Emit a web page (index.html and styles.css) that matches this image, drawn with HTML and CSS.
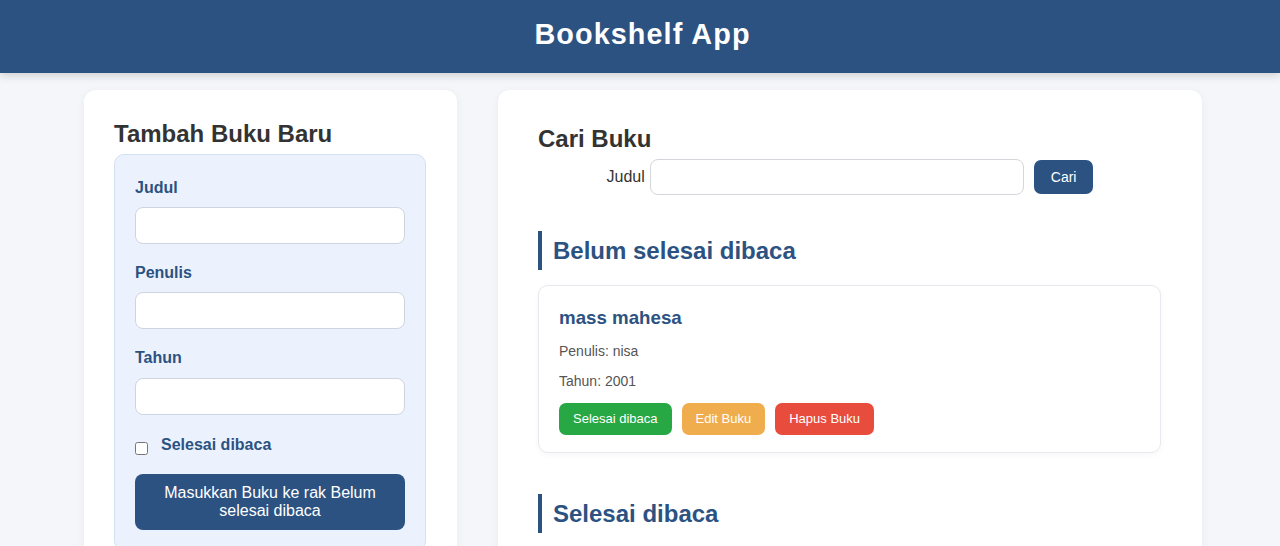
FILE: index.html
```html
<!DOCTYPE html>
<html lang="id">
<head>
<meta charset="utf-8">
<title>Bookshelf App</title>
<link rel="stylesheet" href="styles.css">
</head>
<body>
<header class="app-header">
  <h1 class="app-title">Bookshelf App</h1>
</header>
<main class="layout">
  <section class="card card-left">
    <h2 class="card-title">Tambah Buku Baru</h2>
    <form class="book-form">
      <div class="field">
        <label class="field-label" for="title">Judul</label>
        <input class="field-input" id="title" type="text">
      </div>
      <div class="field">
        <label class="field-label" for="author">Penulis</label>
        <input class="field-input" id="author" type="text">
      </div>
      <div class="field">
        <label class="field-label" for="year">Tahun</label>
        <input class="field-input" id="year" type="number">
      </div>
      <div class="check-row">
        <input class="check" id="complete" type="checkbox">
        <label class="field-label check-label" for="complete">Selesai dibaca</label>
      </div>
      <button class="submit-btn" type="button">Masukkan Buku ke rak Belum selesai dibaca</button>
    </form>
  </section>
  <section class="card card-right">
    <h2 class="card-title">Cari Buku</h2>
    <form class="search-form">
      <label class="search-label" for="search">Judul</label>
      <input class="search-input" id="search" type="text">
      <button class="search-btn" type="button">Cari</button>
    </form>
    <div class="shelf">
      <h2 class="shelf-title">Belum selesai dibaca</h2>
      <div class="book-list">
        <article class="book">
          <h3 class="book-title">mass mahesa</h3>
          <p class="book-meta">Penulis: nisa</p>
          <p class="book-meta">Tahun: 2001</p>
          <div class="book-actions">
            <button class="act act-green" type="button">Selesai dibaca</button>
            <button class="act act-orange" type="button">Edit Buku</button>
            <button class="act act-red" type="button">Hapus Buku</button>
          </div>
        </article>
      </div>
    </div>
    <div class="shelf shelf-second">
      <h2 class="shelf-title">Selesai dibaca</h2>
    </div>
  </section>
</main>
</body>
</html>
```
FILE: styles.css
```css
* { box-sizing: border-box; }
html, body { margin: 0; padding: 0; }
body {
  font-family: "Liberation Sans", Arial, sans-serif;
  background: #f4f6fa;
  color: #333;
}
.app-header {
  background: #2c5282;
  height: 73px;
  padding: 18px 0 0 5px;
  box-shadow: 0 3px 8px rgba(0,0,0,0.15);
  text-align: center;
  position: relative;
  z-index: 1;
}
.app-title {
  margin: 0;
  color: #fff;
  font-size: 28.8px;
  font-weight: 700;
  letter-spacing: 1.08px;
  line-height: 33px;
}
.layout {
  display: flex;
  align-items: flex-start;
  gap: 41px;
  margin: 17px 0 0 84px;
  width: 1118px;
}
.card {
  background: #fff;
  border-radius: 12px;
  box-shadow: 0 2px 10px rgba(0,0,0,0.05);
}
.card-left {
  width: 373px;
  flex: none;
  padding: 30px 31px 30px 30px;
}
.card-right {
  width: 704px;
  flex: none;
  padding: 35px 40px 40px 40px;
}
.card-title {
  margin: 0 0 6px;
  font-size: 24px;
  line-height: 27.6px;
  color: #333;
}
.book-form {
  background: #ebf2fd;
  border: 1px solid #d5e1f2;
  border-radius: 10px;
  padding: 24px 20px 20px;
}
.field { margin-bottom: 20px; }
.field-label {
  display: block;
  font-size: 16px;
  font-weight: 700;
  color: #2c5282;
  margin-bottom: 10px;
  line-height: 18.4px;
}
.field-input {
  display: block;
  width: 100%;
  height: 37px;
  border: 1px solid #cfd5de;
  border-radius: 8px;
  background: #fff;
  font: 14px "Liberation Sans", Arial, sans-serif;
  padding: 0 10px;
}
.check-row {
  display: flex;
  align-items: flex-start;
  margin-bottom: 19px;
}
.check {
  margin: 7px 0 0 0;
  width: 13px;
  height: 13px;
}
.check-label {
  margin: 1px 0 0 13px;
}
.submit-btn {
  display: block;
  width: 100%;
  border: none;
  border-radius: 8px;
  background: #2c5282;
  color: #fff;
  font: 16px/18px "Liberation Sans", Arial, sans-serif;
  padding: 10px 10px;
}
.search-form {
  display: flex;
  align-items: center;
  justify-content: center;
  margin: 0 0 36px;
}
.search-label {
  font-size: 16px;
  color: #333;
  margin-right: 5px;
}
.search-input {
  width: 374px;
  height: 36px;
  border: 1px solid #d3d6db;
  border-radius: 8px;
  padding: 0 10px;
  font: 14px "Liberation Sans", Arial, sans-serif;
}
.search-btn {
  margin-left: 10px;
  border: none;
  border-radius: 7px;
  background: #2c5282;
  color: #fff;
  font: 14px/16px "Liberation Sans", Arial, sans-serif;
  padding: 9px 17px;
}
.shelf-title {
  margin: 0 0 15px;
  border-left: 4px solid #2c5282;
  padding: 6px 0 6px 11px;
  font-size: 24px;
  line-height: 27.6px;
  color: #2c5282;
}
.shelf-second { margin-top: 41px; }
.book {
  border: 1px solid #e6e9ee;
  border-radius: 10px;
  background: #fff;
  box-shadow: 0 2px 6px rgba(0,0,0,0.04);
  padding: 21px 20px 17px;
  margin-right: 1px;
}
.book-title {
  margin: 0 0 14px;
  font-size: 18.72px;
  line-height: 21.5px;
  color: #2c5282;
}
.book-meta {
  margin: 14px 0;
  font-size: 14px;
  line-height: 16px;
  color: #555;
}
.book-actions {
  display: flex;
  gap: 10px;
}
.act {
  border: none;
  border-radius: 7px;
  color: #fff;
  font: 13px/16px "Liberation Sans", Arial, sans-serif;
  padding: 8px 14px;
}
.act-green { background: #28a745; }
.act-orange { background: #f0ad4e; }
.act-red { background: #e74c3c; }
```
